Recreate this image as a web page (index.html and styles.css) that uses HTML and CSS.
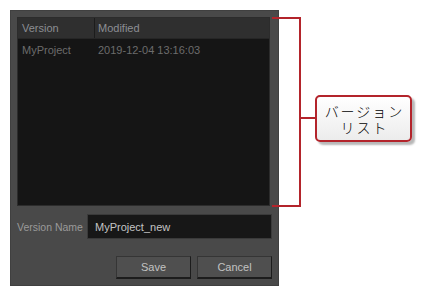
FILE: index.html
```html
<!DOCTYPE html>
<html lang="ja">
<head>
    <meta charset="UTF-8">
    <title>Save Version</title>
    <link rel="stylesheet" href="styles.css">
</head>
<body>
    <div class="page">
        <div class="dialog">
            <div class="version-list">
                <div class="list-header">
                    <div class="col col-version">Version</div>
                    <div class="col col-modified">Modified</div>
                </div>
                <div class="list-row">
                    <div class="col col-version">MyProject</div>
                    <div class="col col-modified">2019-12-04 13:16:03</div>
                </div>
            </div>

            <div class="name-row">
                <label for="versionName">Version Name</label>
                <input type="text" id="versionName" value="MyProject_new">
            </div>

            <div class="buttons">
                <button class="button">Save</button>
                <button class="button">Cancel</button>
            </div>
        </div>

        <!-- 注釈 -->
        <div class="annotation">
            <div class="bracket"></div>
            <div class="connector"></div>
            <div class="callout">
                <span class="callout-line">バージョン</span>
                <span class="callout-line">リスト</span>
            </div>
        </div>
    </div>
</body>
</html>
```

FILE: styles.css
```css
* {
    margin: 0;
    padding: 0;
    box-sizing: border-box;
}

body {
    background: #ffffff;
    font-family: "Liberation Sans", Arial, sans-serif;
    font-size: 11px;
}

.page {
    display: flex;
    align-items: flex-start;
    padding: 10px;
}

.dialog {
    width: 269px;
    height: 276px;
    background: #494949;
    border: 1px solid #404040;
    padding: 6px;
    display: flex;
    flex-direction: column;
}

.version-list {
    width: 253px;
    height: 190px;
    background: #151515;
    border: 1px solid #2c2c2c;
}

.list-header {
    display: flex;
    height: 21px;
    background: #2f2f2f;
    border-bottom: 1px solid #262626;
    color: #8c8e93;
    align-items: center;
}

.list-header .col-version {
    border-right: 1px solid #1c1c1c;
    height: 100%;
    display: flex;
    align-items: center;
}

.col-version {
    width: 77px;
    padding-left: 4px;
}

.col-modified {
    padding-left: 3px;
}

.list-row {
    display: flex;
    padding-top: 3px;
    line-height: 16px;
    color: #6c6c6c;
}

.name-row {
    display: flex;
    align-items: center;
    margin-top: 8px;
}

.name-row label {
    width: 70px;
    color: #9a9a9a;
    font-size: 10.5px;
}

.name-row input {
    width: 185px;
    height: 25px;
    background: #171717;
    border: 1px solid #3a3a3a;
    color: #c4c4c4;
    font-family: "Liberation Sans", Arial, sans-serif;
    font-size: 11px;
    padding-left: 7px;
    outline: none;
}

.buttons {
    display: flex;
    justify-content: flex-end;
    gap: 6px;
    margin-top: 17px;
}

.button {
    width: 75px;
    height: 23px;
    background: #4f4f4f;
    border: 1px solid #353535;
    border-right-color: #1c1c1c;
    border-bottom: 2px solid #1c1c1c;
    color: #c2c2c2;
    font-family: "Liberation Sans", Arial, sans-serif;
    font-size: 11px;
}

.annotation {
    display: flex;
    align-items: flex-start;
    margin-top: 7px;
    margin-left: -7px;
}

.bracket {
    width: 29px;
    height: 190px;
    border: 2px solid #b3242b;
    border-left: none;
}

.connector {
    width: 14px;
    height: 2px;
    margin-top: 100px;
    background: #b3242b;
}

.callout {
    width: 97px;
    height: 47px;
    margin-top: 78px;
    border: 2px solid #b3242b;
    border-radius: 5px;
    background: linear-gradient(#ffffff, #ececec);
    box-shadow: 3px 3px 2px #b8b8b8;
    display: flex;
    flex-direction: column;
    align-items: center;
    justify-content: center;
    font-family: "Noto Sans CJK JP", sans-serif;
    font-size: 14px;
    font-weight: 300;
    color: #000000;
}

.callout-line {
    display: block;
    height: 16px;
    line-height: 16px;
    letter-spacing: 2px;
    padding-left: 2px;
}
```
